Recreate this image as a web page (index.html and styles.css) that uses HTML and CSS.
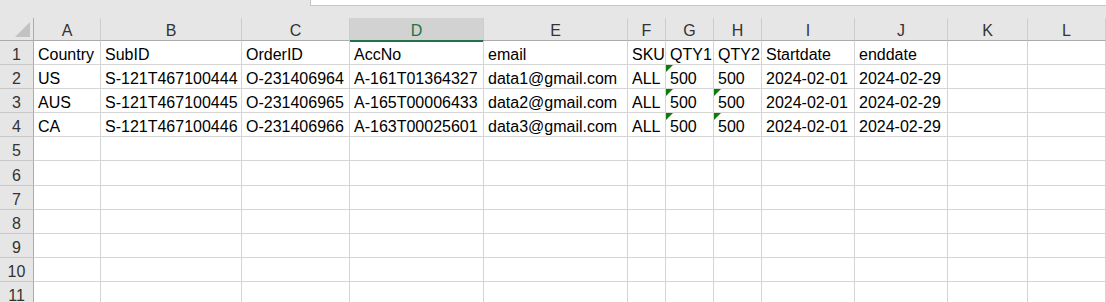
FILE: index.html
```html
<!DOCTYPE html>
<html>
<head>
<meta charset="utf-8">
<link rel="stylesheet" href="styles.css">
</head>
<body>
<div class="topbar"><div class="formula"></div></div>
<div class="sheet">
  <div class="row head">
    <div class="corner"><span class="selall"></span></div>
    <div class="ch">A</div><div class="ch">B</div><div class="ch">C</div><div class="ch sel">D</div><div class="ch">E</div><div class="ch">F</div><div class="ch">G</div><div class="ch">H</div><div class="ch">I</div><div class="ch">J</div><div class="ch">K</div><div class="ch">L</div>
  </div>
  <div class="row">
    <div class="rh">1</div>
    <div class="c">Country</div><div class="c">SubID</div><div class="c">OrderID</div><div class="c">AccNo</div><div class="c">email</div><div class="c">SKU</div><div class="c">QTY1</div><div class="c">QTY2</div><div class="c">Startdate</div><div class="c">enddate</div><div class="c"></div><div class="c"></div>
  </div>
  <div class="row">
    <div class="rh">2</div>
    <div class="c">US</div><div class="c">S-121T467100444</div><div class="c">O-231406964</div><div class="c">A-161T01364327</div><div class="c">data1@gmail.com</div><div class="c">ALL</div><div class="c flag">500</div><div class="c">500</div><div class="c">2024-02-01</div><div class="c">2024-02-29</div><div class="c"></div><div class="c"></div>
  </div>
  <div class="row">
    <div class="rh">3</div>
    <div class="c">AUS</div><div class="c">S-121T467100445</div><div class="c">O-231406965</div><div class="c">A-165T00006433</div><div class="c">data2@gmail.com</div><div class="c">ALL</div><div class="c flag">500</div><div class="c flag">500</div><div class="c">2024-02-01</div><div class="c">2024-02-29</div><div class="c"></div><div class="c"></div>
  </div>
  <div class="row">
    <div class="rh">4</div>
    <div class="c">CA</div><div class="c">S-121T467100446</div><div class="c">O-231406966</div><div class="c">A-163T00025601</div><div class="c">data3@gmail.com</div><div class="c">ALL</div><div class="c flag">500</div><div class="c flag">500</div><div class="c">2024-02-01</div><div class="c">2024-02-29</div><div class="c"></div><div class="c"></div>
  </div>
  <div class="row">
    <div class="rh">5</div>
    <div class="c"></div><div class="c"></div><div class="c"></div><div class="c"></div><div class="c"></div><div class="c"></div><div class="c"></div><div class="c"></div><div class="c"></div><div class="c"></div><div class="c"></div><div class="c"></div>
  </div>
  <div class="row tall">
    <div class="rh">6</div>
    <div class="c"></div><div class="c"></div><div class="c"></div><div class="c"></div><div class="c"></div><div class="c"></div><div class="c"></div><div class="c"></div><div class="c"></div><div class="c"></div><div class="c"></div><div class="c"></div>
  </div>
  <div class="row">
    <div class="rh">7</div>
    <div class="c"></div><div class="c"></div><div class="c"></div><div class="c"></div><div class="c"></div><div class="c"></div><div class="c"></div><div class="c"></div><div class="c"></div><div class="c"></div><div class="c"></div><div class="c"></div>
  </div>
  <div class="row">
    <div class="rh">8</div>
    <div class="c"></div><div class="c"></div><div class="c"></div><div class="c"></div><div class="c"></div><div class="c"></div><div class="c"></div><div class="c"></div><div class="c"></div><div class="c"></div><div class="c"></div><div class="c"></div>
  </div>
  <div class="row">
    <div class="rh">9</div>
    <div class="c"></div><div class="c"></div><div class="c"></div><div class="c"></div><div class="c"></div><div class="c"></div><div class="c"></div><div class="c"></div><div class="c"></div><div class="c"></div><div class="c"></div><div class="c"></div>
  </div>
  <div class="row">
    <div class="rh">10</div>
    <div class="c"></div><div class="c"></div><div class="c"></div><div class="c"></div><div class="c"></div><div class="c"></div><div class="c"></div><div class="c"></div><div class="c"></div><div class="c"></div><div class="c"></div><div class="c"></div>
  </div>
  <div class="row">
    <div class="rh">11</div>
    <div class="c"></div><div class="c"></div><div class="c"></div><div class="c"></div><div class="c"></div><div class="c"></div><div class="c"></div><div class="c"></div><div class="c"></div><div class="c"></div><div class="c"></div><div class="c"></div>
  </div>
</div>
</body>
</html>
```

FILE: styles.css
```css
* { box-sizing: border-box; }
html, body { margin: 0; padding: 0; }
body {
  width: 1106px;
  height: 302px;
  overflow: hidden;
  background: #e6e6e6;
  font-family: "Liberation Sans", Arial, sans-serif;
  font-size: 16px;
  color: #000;
}
.topbar {
  height: 18px;
  padding-left: 310px;
}
.formula {
  height: 6px;
  background: #fff;
  border-left: 1px solid #c6c6c6;
  border-bottom: 1px solid #c6c6c6;
}
.sheet {
  background: #fff;
}
.row {
  display: grid;
  grid-template-columns: 34px 67px 141px 108px 134px 144px 38px 48px 48px 93px 93px 80px 1fr;
  height: 24px;
}
.row.tall { height: 25px; }
.row.head {
  height: 23px;
  background: #e6e6e6;
}
.row > div {
  display: flex;
  align-items: flex-end;
  line-height: 18px;
  white-space: nowrap;
  overflow: hidden;
}
.corner {
  justify-content: flex-end;
  padding: 0 3px 3px 0;
  border-right: 1px solid #ababab;
  border-bottom: 1px solid #ababab;
}
.selall {
  width: 15px;
  height: 15px;
  background: #c2c2c2;
  clip-path: polygon(100% 0, 100% 100%, 0 100%);
}
.ch {
  justify-content: center;
  color: #333;
  border-right: 1px solid #cdcdcd;
  border-bottom: 1px solid #ababab;
}
.ch.sel {
  position: relative;
  background: #d2d2d2;
  color: #217346;
  border-bottom: 1px solid #217346;
  box-shadow: 0 1px 0 #217346;
}
.rh {
  justify-content: center;
  background: #e6e6e6;
  color: #333;
  border-right: 1px solid #ababab;
  border-bottom: 1px solid #c8c8c8;
}
.c {
  position: relative;
  padding: 0 2px 0 4px;
  border-right: 1px solid #d4d4d4;
  border-bottom: 1px solid #d4d4d4;
}
.c.flag::before {
  content: "";
  position: absolute;
  left: 0;
  top: 0;
  width: 7px;
  height: 7px;
  background: #0f7b0f;
  clip-path: polygon(0 0, 100% 0, 0 100%);
}
```
